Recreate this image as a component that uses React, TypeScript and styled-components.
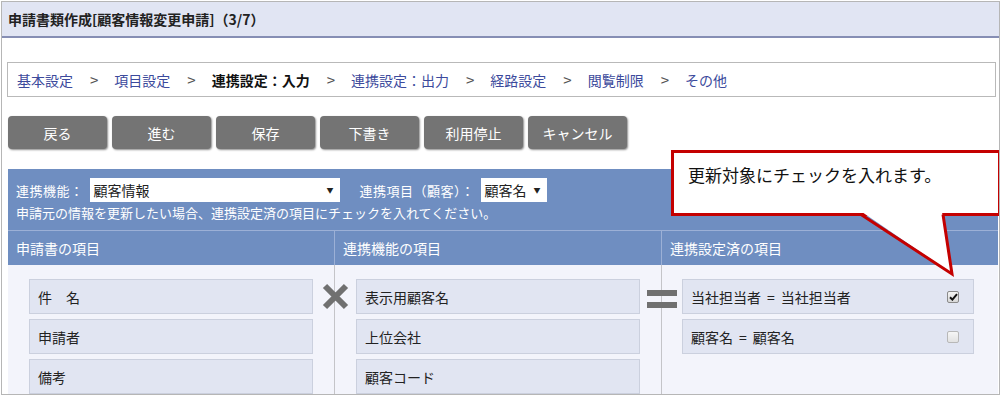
import styled, { createGlobalStyle } from 'styled-components'

const GlobalStyle = createGlobalStyle`
  html, body {
    margin: 0;
    padding: 0;
    background: #fff;
  }
  body {
    font-family: "Noto Sans CJK JP", "Noto Sans", sans-serif;
    color: #222;
    overflow: hidden;
  }
`

const Frame = styled.div`
  position: relative;
  margin: 1px 0 0 1px;
  width: 999px;
  height: 394px;
  border: 1px solid #b6b6b6;
  box-sizing: border-box;
  overflow: hidden;
  background: #fff;
`

const TitleBar = styled.div`
  height: 34px;
  border-bottom: 2px solid #868eb4;
  background: #e1e5f3;
  padding-left: 6px;
  display: flex;
  align-items: center;
  font-size: 14px;
  font-weight: bold;
  color: #222;
`

const Content = styled.div`
  padding: 24px 1px 0 6px;
`

const Breadcrumb = styled.nav`
  margin: 0 2px 0 -1px;
  height: 35px;
  box-sizing: border-box;
  border: 1px solid #b9b9b9;
  padding-left: 9px;
  display: flex;
  align-items: center;
  font-size: 14px;
`

const Crumb = styled.span<{ $current?: boolean }>`
  color: ${({ $current }) => ($current ? '#111' : '#3c4a9c')};
  font-weight: ${({ $current }) => ($current ? 'bold' : 'normal')};
`

const Sep = styled.span`
  margin: 0 16px 0 17px;
  font-size: 15px;
  color: #555;
`

const ButtonRow = styled.div`
  margin-top: 19px;
  display: flex;
  gap: 5px;
`

const ActionButton = styled.button`
  width: 99px;
  height: 33px;
  border: none;
  border-radius: 4px;
  background: #747474;
  color: #fff;
  font-family: inherit;
  font-size: 14px;
  box-shadow: 1px 1px 2px rgba(0, 0, 0, 0.45);
  padding: 0;
`

const Panel = styled.section`
  margin-top: 20px;
  background: #6f8ec1;
`

const PanelTop = styled.div`
  padding: 9px 8px 8px 8px;
  color: #fff;
  font-size: 13px;
`

const FilterRow = styled.div`
  height: 24px;
  display: flex;
  align-items: center;
`

const Label = styled.span<{ $gap?: number }>`
  margin-left: ${({ $gap }) => $gap ?? 0}px;
  margin-right: 6px;
  letter-spacing: 0.5px;
`

const Select = styled.div<{ $width: number }>`
  width: ${({ $width }) => $width}px;
  height: 24px;
  box-sizing: border-box;
  background: #fff;
  color: #222;
  font-size: 14px;
  padding: 0 6px 0 4px;
  display: flex;
  align-items: center;
  justify-content: space-between;
`

const Caret = styled.span`
  font-size: 7px;
  color: #222;
`

const Hint = styled.div`
  margin-top: 2px;
  line-height: 18px;
`

const Columns = styled.div`
  display: grid;
  grid-template-columns: 326px 327px 1fr;
`

const HeaderCell = styled.div<{ $divider?: boolean }>`
  height: 34px;
  border-top: 1px solid #9cb0d6;
  border-left: ${({ $divider }) => ($divider ? '1px solid #9cb0d6' : 'none')};
  padding-left: 8px;
  display: flex;
  align-items: center;
  color: #fff;
  font-size: 14px;
`

const BodyCell = styled.div<{ $divider?: boolean; $pl: number; $pr: number }>`
  position: relative;
  height: 140px;
  background: #f3f4fb;
  border-left: ${({ $divider }) => ($divider ? '1px solid #c4c4c8' : 'none')};
  padding: 14px ${({ $pr }) => $pr}px 0 ${({ $pl }) => $pl}px;
  display: flex;
  flex-direction: column;
  gap: 5px;
`

const Item = styled.div`
  height: 35px;
  box-sizing: border-box;
  flex-shrink: 0;
  border: 1px solid #cbd0de;
  background: #e1e5f2;
  padding: 0 14px 0 8px;
  display: flex;
  align-items: center;
  justify-content: space-between;
  font-size: 14px;
  color: #222;
`

const Eq = styled.span`
  margin: 0 6px;
`

const Operator = styled.svg<{ $left: number; $top: number }>`
  position: absolute;
  left: ${({ $left }) => $left}px;
  top: ${({ $top }) => $top}px;
`

const Check = styled.span<{ $checked?: boolean }>`
  width: 12px;
  height: 12px;
  box-sizing: border-box;
  border: 1px solid ${({ $checked }) => ($checked ? '#8a8a8a' : '#b8b8b8')};
  border-radius: 2px;
  background: ${({ $checked }) => ($checked ? 'linear-gradient(#f4f4f4, #d8d8d8)' : 'linear-gradient(#f6f6f6, #e2e2e2)')};
  display: flex;
  align-items: center;
  justify-content: center;
`

const Callout = styled.div`
  position: absolute;
  left: 669px;
  top: 148px;
  width: 330px;
  height: 66px;
  box-sizing: border-box;
  border: 3px solid #c40000;
  background: #fff;
  padding: 10px 0 0 14px;
  font-size: 17px;
  line-height: 24px;
  color: #111;
`

const Pointer = styled.svg`
  position: absolute;
  left: 848px;
  top: 203px;
`

const crumbs = ['基本設定', '項目設定', '連携設定：入力', '連携設定：出力', '経路設定', '閲覧制限', 'その他']
const buttons = ['戻る', '進む', '保存', '下書き', '利用停止', 'キャンセル']
const sourceItems = ['件\u3000名', '申請者', '備考']
const targetItems = ['表示用顧客名', '上位会社', '顧客コード']
const linkedItems = [
  { from: '当社担当者', to: '当社担当者', checked: true },
  { from: '顧客名', to: '顧客名', checked: false },
]

function App() {
  return (
    <>
      <GlobalStyle />
      <Frame>
        <TitleBar>申請書類作成[顧客情報変更申請]（3/7）</TitleBar>
        <Content>
          <Breadcrumb>
            {crumbs.map((c, i) => (
              <span key={c}>
                {i > 0 && <Sep>&gt;</Sep>}
                <Crumb $current={i === 2}>{c}</Crumb>
              </span>
            ))}
          </Breadcrumb>

          <ButtonRow>
            {buttons.map((b) => (
              <ActionButton key={b}>{b}</ActionButton>
            ))}
          </ButtonRow>

          <Panel>
            <PanelTop>
              <FilterRow>
                <Label>連携機能：</Label>
                <Select $width={250}>
                  顧客情報<Caret>▼</Caret>
                </Select>
                <Label $gap={20}>連携項目（顧客）：</Label>
                <Select $width={66}>
                  顧客名<Caret>▼</Caret>
                </Select>
              </FilterRow>
              <Hint>申請元の情報を更新したい場合、連携設定済の項目にチェックを入れてください。</Hint>
            </PanelTop>

            <Columns>
              <HeaderCell>申請書の項目</HeaderCell>
              <HeaderCell $divider>連携機能の項目</HeaderCell>
              <HeaderCell $divider>連携設定済の項目</HeaderCell>

              <BodyCell $pl={21} $pr={21}>
                {sourceItems.map((t) => (
                  <Item key={t}>{t}</Item>
                ))}
              </BodyCell>
              <BodyCell $divider $pl={21} $pr={21}>
                <Operator $left={-13} $top={18} width="27" height="27" viewBox="0 0 27 27">
                  <path d="M3 3 L24 24 M24 3 L3 24" stroke="#707070" strokeWidth="6" />
                </Operator>
                {targetItems.map((t) => (
                  <Item key={t}>{t}</Item>
                ))}
              </BodyCell>
              <BodyCell $divider $pl={20} $pr={24}>
                <Operator $left={-15} $top={25} width="30" height="19" viewBox="0 0 30 19">
                  <rect x="0" y="0" width="30" height="6" fill="#707070" />
                  <rect x="0" y="12" width="30" height="6" fill="#707070" />
                </Operator>
                {linkedItems.map((it) => (
                  <Item key={it.from}>
                    <span>
                      {it.from}
                      <Eq>=</Eq>
                      {it.to}
                    </span>
                    <Check $checked={it.checked}>
                      {it.checked && (
                        <svg width="9" height="8" viewBox="0 0 9 8">
                          <path d="M1 4.2 L3.4 6.6 L8 1.2" fill="none" stroke="#111" strokeWidth="2" />
                        </svg>
                      )}
                    </Check>
                  </Item>
                ))}
              </BodyCell>
            </Columns>
          </Panel>
        </Content>

        <Callout>更新対象にチェックを入れます。</Callout>
        <Pointer width="112" height="80" viewBox="0 0 112 80">
          <polygon points="12,7 101,68 92,7" fill="#fff" />
          <polyline points="11,9.5 102,69 93,9.5" fill="none" stroke="#c40000" strokeWidth="3" />
        </Pointer>
      </Frame>
    </>
  )
}

export default App
